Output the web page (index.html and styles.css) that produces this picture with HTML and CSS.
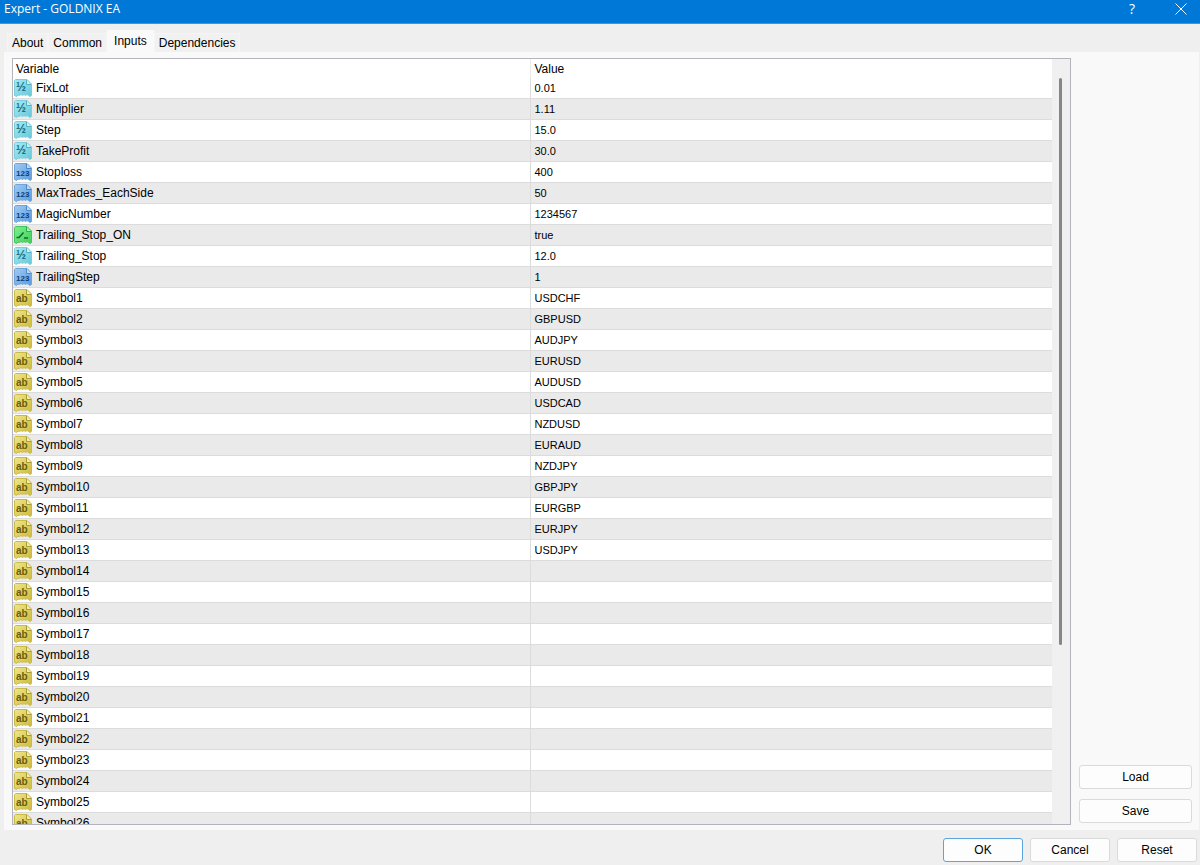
FILE: index.html
```
<!DOCTYPE html>
<html lang="en">
<head>
<meta charset="utf-8">
<title>Expert - GOLDNIX EA</title>
<link rel="stylesheet" href="styles.css">
</head>
<body>
<svg class="sprite" aria-hidden="true">
  <defs>
    <linearGradient id="g-cyan" x1="0" y1="0" x2="1" y2="1"><stop offset="0" stop-color="#a4edf6"/><stop offset="1" stop-color="#66c6d8"/></linearGradient>
    <linearGradient id="g-blue" x1="0" y1="0" x2="1" y2="1"><stop offset="0" stop-color="#9fcbf5"/><stop offset="1" stop-color="#5b9bdc"/></linearGradient>
    <linearGradient id="g-green" x1="0" y1="0" x2="1" y2="1"><stop offset="0" stop-color="#7df08c"/><stop offset="1" stop-color="#3fcf5c"/></linearGradient>
    <linearGradient id="g-gold" x1="0" y1="0" x2="1" y2="1"><stop offset="0" stop-color="#efe68a"/><stop offset="1" stop-color="#cdbb3e"/></linearGradient>
    <path id="sheet" d="M1.5.5H13L17.5 5V16.5L16 17.5L14.5 16.5L13 15.5L11.5 16.5L10 15.5L8.500 16.5L7 15.5L5.500 16.5L4 16L2.500 17.5L.5 16.5V1.500Z"/>
    <path id="fold" d="M12.5.8V5.500H17.2"/>
    <g id="double"><use href="#sheet" fill="url(#g-cyan)" stroke="#7fcddb"/><use href="#fold" fill="#c3f3f9" stroke="#58afc1"/></g>
    <g id="int"><use href="#sheet" fill="url(#g-blue)" stroke="#6ea5dc"/><use href="#fold" fill="#bcdcfa" stroke="#4c8acb"/></g>
    <g id="bool"><use href="#sheet" fill="url(#g-green)" stroke="#46c35d"/><use href="#fold" fill="#a3f7ae" stroke="#2fae49"/><path d="M2.500 11.500H5L9.500 6.500M10 12H14" fill="none" stroke="#126b29" stroke-width="1.600"/></g>
    <g id="string"><use href="#sheet" fill="url(#g-gold)" stroke="#c9ba4c"/><use href="#fold" fill="#f5efad" stroke="#a99a32"/></g>
  </defs>
</svg>
<div class="dialog">
  <header class="titlebar">
    <h1 class="title">Expert - GOLDNIX EA</h1>
    <button class="caption help" type="button" aria-label="Help">?</button>
    <button class="caption" type="button" aria-label="Close"><svg width="12" height="12" viewBox="0 0 12 12"><path d="M.5.5L11.500 11.500M11.500.5L.5 11.500" stroke="#fff" fill="none"/></svg></button>
  </header>
  <nav class="tabs" role="tablist">
    <button class="tab" type="button" role="tab">About</button>
    <button class="tab" type="button" role="tab">Common</button>
    <button class="tab active" type="button" role="tab" aria-selected="true">Inputs</button>
    <button class="tab" type="button" role="tab">Dependencies</button>
  </nav>
  <main class="panel">
    <div class="grid">
      <div class="view">
        <table class="inputs">
          <thead><tr><th>Variable</th><th>Value</th></tr></thead>
          <tbody>
            <tr><td><svg class="icon double"><use href="#double"/><text x="2" y="12">½</text></svg>FixLot</td><td>0.01</td></tr>
            <tr><td><svg class="icon double"><use href="#double"/><text x="2" y="12">½</text></svg>Multiplier</td><td>1.11</td></tr>
            <tr><td><svg class="icon double"><use href="#double"/><text x="2" y="12">½</text></svg>Step</td><td>15.0</td></tr>
            <tr><td><svg class="icon double"><use href="#double"/><text x="2" y="12">½</text></svg>TakeProfit</td><td>30.0</td></tr>
            <tr><td><svg class="icon int"><use href="#int"/><text x="2" y="13">123</text></svg>Stoploss</td><td>400</td></tr>
            <tr><td><svg class="icon int"><use href="#int"/><text x="2" y="13">123</text></svg>MaxTrades_EachSide</td><td>50</td></tr>
            <tr><td><svg class="icon int"><use href="#int"/><text x="2" y="13">123</text></svg>MagicNumber</td><td>1234567</td></tr>
            <tr><td><svg class="icon"><use href="#bool"/></svg>Trailing_Stop_ON</td><td>true</td></tr>
            <tr><td><svg class="icon double"><use href="#double"/><text x="2" y="12">½</text></svg>Trailing_Stop</td><td>12.0</td></tr>
            <tr><td><svg class="icon int"><use href="#int"/><text x="2" y="13">123</text></svg>TrailingStep</td><td>1</td></tr>
            <tr><td><svg class="icon string"><use href="#string"/><text x="2" y="13">ab</text></svg>Symbol1</td><td>USDCHF</td></tr>
            <tr><td><svg class="icon string"><use href="#string"/><text x="2" y="13">ab</text></svg>Symbol2</td><td>GBPUSD</td></tr>
            <tr><td><svg class="icon string"><use href="#string"/><text x="2" y="13">ab</text></svg>Symbol3</td><td>AUDJPY</td></tr>
            <tr><td><svg class="icon string"><use href="#string"/><text x="2" y="13">ab</text></svg>Symbol4</td><td>EURUSD</td></tr>
            <tr><td><svg class="icon string"><use href="#string"/><text x="2" y="13">ab</text></svg>Symbol5</td><td>AUDUSD</td></tr>
            <tr><td><svg class="icon string"><use href="#string"/><text x="2" y="13">ab</text></svg>Symbol6</td><td>USDCAD</td></tr>
            <tr><td><svg class="icon string"><use href="#string"/><text x="2" y="13">ab</text></svg>Symbol7</td><td>NZDUSD</td></tr>
            <tr><td><svg class="icon string"><use href="#string"/><text x="2" y="13">ab</text></svg>Symbol8</td><td>EURAUD</td></tr>
            <tr><td><svg class="icon string"><use href="#string"/><text x="2" y="13">ab</text></svg>Symbol9</td><td>NZDJPY</td></tr>
            <tr><td><svg class="icon string"><use href="#string"/><text x="2" y="13">ab</text></svg>Symbol10</td><td>GBPJPY</td></tr>
            <tr><td><svg class="icon string"><use href="#string"/><text x="2" y="13">ab</text></svg>Symbol11</td><td>EURGBP</td></tr>
            <tr><td><svg class="icon string"><use href="#string"/><text x="2" y="13">ab</text></svg>Symbol12</td><td>EURJPY</td></tr>
            <tr><td><svg class="icon string"><use href="#string"/><text x="2" y="13">ab</text></svg>Symbol13</td><td>USDJPY</td></tr>
            <tr><td><svg class="icon string"><use href="#string"/><text x="2" y="13">ab</text></svg>Symbol14</td><td></td></tr>
            <tr><td><svg class="icon string"><use href="#string"/><text x="2" y="13">ab</text></svg>Symbol15</td><td></td></tr>
            <tr><td><svg class="icon string"><use href="#string"/><text x="2" y="13">ab</text></svg>Symbol16</td><td></td></tr>
            <tr><td><svg class="icon string"><use href="#string"/><text x="2" y="13">ab</text></svg>Symbol17</td><td></td></tr>
            <tr><td><svg class="icon string"><use href="#string"/><text x="2" y="13">ab</text></svg>Symbol18</td><td></td></tr>
            <tr><td><svg class="icon string"><use href="#string"/><text x="2" y="13">ab</text></svg>Symbol19</td><td></td></tr>
            <tr><td><svg class="icon string"><use href="#string"/><text x="2" y="13">ab</text></svg>Symbol20</td><td></td></tr>
            <tr><td><svg class="icon string"><use href="#string"/><text x="2" y="13">ab</text></svg>Symbol21</td><td></td></tr>
            <tr><td><svg class="icon string"><use href="#string"/><text x="2" y="13">ab</text></svg>Symbol22</td><td></td></tr>
            <tr><td><svg class="icon string"><use href="#string"/><text x="2" y="13">ab</text></svg>Symbol23</td><td></td></tr>
            <tr><td><svg class="icon string"><use href="#string"/><text x="2" y="13">ab</text></svg>Symbol24</td><td></td></tr>
            <tr><td><svg class="icon string"><use href="#string"/><text x="2" y="13">ab</text></svg>Symbol25</td><td></td></tr>
            <tr><td><svg class="icon string"><use href="#string"/><text x="2" y="13">ab</text></svg>Symbol26</td><td></td></tr>
          </tbody>
        </table>
      </div>
      <div class="rail"><div class="thumb"></div></div>
    </div>
    <div class="side">
      <button class="btn" type="button">Load</button>
      <button class="btn" type="button">Save</button>
    </div>
  </main>
  <footer class="actions">
    <button class="btn primary" type="button">OK</button>
    <button class="btn" type="button">Cancel</button>
    <button class="btn" type="button">Reset</button>
  </footer>
</div>
</body>
</html>
```
FILE: styles.css
```
* { box-sizing: border-box; }
body {
  margin: 0;
  background: #efefef;
  color: #000;
  font: 12px/14px "Liberation Sans", Arial, sans-serif;
}
button { font: inherit; color: inherit; margin: 0; }
.sprite { position: absolute; width: 0; height: 0; }
.dialog { display: flex; flex-direction: column; height: 100vh; }

.titlebar {
  display: flex;
  flex: none;
  height: 24px;
  background: #0078d7;
  border-bottom: 1px solid #3c97e0;
  color: #fff;
  font: 12px/18px "Open Sans", "Noto Sans", sans-serif;
}
.title { flex: 1; margin: 0; padding-left: 4px; font: inherit; }
.caption {
  display: flex;
  justify-content: center;
  align-items: center;
  width: 38px;
  height: 17px;
  padding: 0;
  border: 0;
  background: none;
}
.help { width: 60px; font-size: 14px; }

.tabs { display: flex; flex: none; align-items: flex-end; height: 28px; padding-left: 7px; }
.tab {
  height: 19px;
  padding: 0 4px;
  border: 1px solid #f5f5f5;
  border-bottom: 0;
  background: #f1f1f1;
}
.tab.active { height: 22px; padding: 0 6px 2px; background: #f9f9f9; border-color: #f9f9f9; }

.panel {
  display: flex;
  flex: 1;
  min-height: 0;
  margin: 0 1px 0 4px;
  padding: 6px 7px 5px 8px;
  gap: 8px;
  background: #f9f9f9;
}
.grid { display: flex; flex: 1; min-width: 0; border: 1px solid #b3b4bc; background: #fff; }
.view { flex: 1; min-width: 0; overflow: hidden; }
.inputs { width: 100%; table-layout: fixed; border-collapse: separate; border-spacing: 0; }
.inputs th { height: 19px; padding: 0 3px; text-align: left; font-weight: normal; }
.inputs td { height: 21px; padding: 0 3px; border-bottom: 1px solid #dcdcdc; white-space: nowrap; }
.inputs td:last-child { font-size: 11px; }
.inputs td:first-child { padding-left: 1px; }
.inputs td:first-child, .inputs th:first-child { border-right: 1px solid #dcdcdc; }
.inputs th:first-child { width: 49.9%; border-right-color: #ececec; }
.inputs tbody tr:nth-child(even) { background: #eaeaea; }
.icon { width: 18px; height: 18px; margin-right: 4px; vertical-align: -5px; font-weight: bold; }
.icon.double { font-size: 12px; fill: #1b7187; }
.icon.int { font-size: 8px; fill: #0d3f7a; }
.icon.string { font-size: 10px; fill: #6b5c0c; }
.rail { flex: none; width: 18px; padding: 19px 8px 0 7px; background: #f0f0f0; }
.thumb { height: 76%; border-radius: 2px; background: #868686; }

.side { display: flex; flex: none; flex-direction: column; justify-content: flex-end; gap: 10px; width: 113px; padding-bottom: 2px; }
.btn { height: 24px; padding: 0; border: 1px solid #dadada; border-radius: 3px; background: #fdfdfd; }
.btn.primary { border-color: #5ba4dd; }
.actions { display: flex; flex: none; justify-content: flex-end; gap: 7px; height: 35px; padding: 8px 3px 0 0; }
.actions .btn { width: 80px; }
```
